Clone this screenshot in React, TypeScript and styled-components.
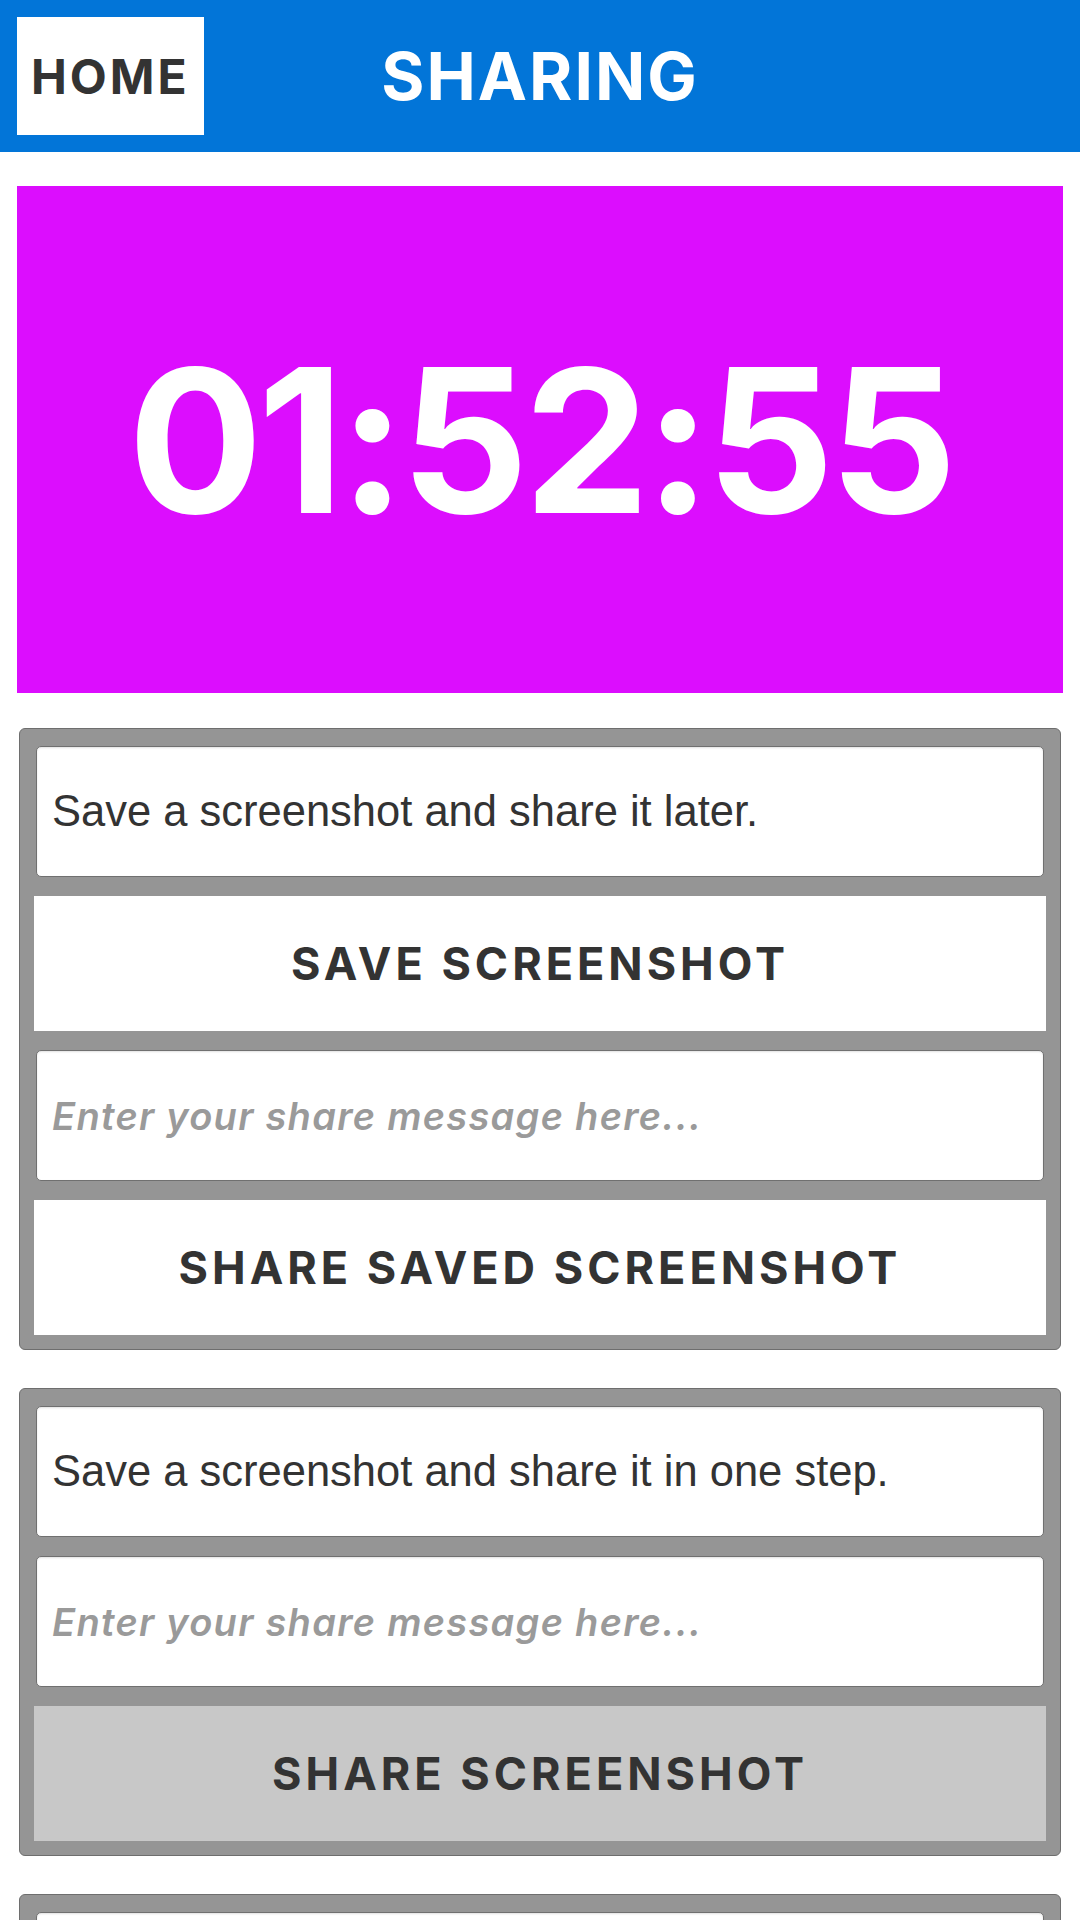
import React from 'react';
import styled, { createGlobalStyle } from 'styled-components';

const GlobalStyle = createGlobalStyle`
	html, body {
		margin: 0;
		padding: 0;
		background: #ffffff;
	}

	* {
		box-sizing: border-box;
	}
`;

const Page = styled.div`
	width: 1080px;
	height: 1920px;
	display: flex;
	flex-direction: column;
	overflow: hidden;
`;

const Header = styled.header`
	height: 152px;
	flex-shrink: 0;
	padding: 17px;
	display: grid;
	grid-template-columns: 1fr auto 1fr;
	align-items: center;
	background-color: #0275d8;
`;

const HomeButton = styled.button`
	justify-self: start;
	height: 118px;
	padding: 0 14px;
	border: none;
	background-color: #ffffff;
	color: #333333;
	font-family: Inter, 'Noto Sans', sans-serif;
	font-weight: 700;
	font-size: 48px;
	letter-spacing: 3px;
`;

const Title = styled.h1`
	margin: 0;
	color: #ffffff;
	font-family: Inter, 'Noto Sans', sans-serif;
	font-weight: 700;
	font-size: 66px;
	letter-spacing: 2px;
`;

const Timer = styled.div`
	height: 507px;
	flex-shrink: 0;
	margin: 34px 17px 0;
	display: flex;
	align-items: center;
	justify-content: center;
	background-color: #dc0dfe;
	color: #ffffff;
	font-family: Inter, 'Noto Sans', sans-serif;
	font-weight: 700;
	font-size: 200px;
	letter-spacing: -5px;
`;

const Cards = styled.div`
	margin-top: 35px;
	display: flex;
	flex-direction: column;
	gap: 38px;
`;

const Card = styled.section`
	margin: 0 19px;
	padding: 17px 14px 14px;
	display: flex;
	flex-direction: column;
	gap: 19px;
	flex-shrink: 0;
	border: 1px solid #6e6e6e;
	border-radius: 6px;
	background-color: #959595;
`;

const Field = styled.div`
	height: 131px;
	flex-shrink: 0;
	margin: 0 2px;
	padding: 0 15px;
	display: flex;
	align-items: center;
	border: 1px solid #707070;
	border-radius: 5px;
	background-color: #ffffff;
	box-shadow: inset 0 1px 2px rgba(0, 0, 0, 0.12);
	color: #333333;
	font-family: 'Liberation Sans', Arial, sans-serif;
	font-size: 43.5px;
`;

const MessageInput = styled.input`
	height: 131px;
	flex-shrink: 0;
	margin: 0 2px;
	padding: 0 15px;
	border: 1px solid #707070;
	border-radius: 5px;
	background-color: #ffffff;
	box-shadow: inset 0 1px 2px rgba(0, 0, 0, 0.12);
	color: #333333;
	font-family: Inter, 'Noto Sans', sans-serif;
	font-style: italic;
	font-weight: 600;
	font-size: 38px;
	letter-spacing: 1.3px;
	outline: none;

	&::placeholder {
		color: #9a9a9a;
	}
`;

const ActionButton = styled.button<{ $disabled?: boolean }>`
	height: 135px;
	flex-shrink: 0;
	border: none;
	background-color: ${({ $disabled }) => ($disabled ? '#c8c8c8' : '#ffffff')};
	color: #333333;
	font-family: Inter, 'Noto Sans', sans-serif;
	font-weight: 700;
	font-size: 45px;
	letter-spacing: 4px;
`;

const App = () => {
	return (
		<Page>
			<GlobalStyle />
			<Header>
				<HomeButton>HOME</HomeButton>
				<Title>SHARING</Title>
			</Header>
			<Timer>01:52:55</Timer>
			<Cards>
				<Card>
					<Field>Save a screenshot and share it later.</Field>
					<ActionButton>SAVE SCREENSHOT</ActionButton>
					<MessageInput placeholder="Enter your share message here..." />
					<ActionButton>SHARE SAVED SCREENSHOT</ActionButton>
				</Card>
				<Card>
					<Field>Save a screenshot and share it in one step.</Field>
					<MessageInput placeholder="Enter your share message here..." />
					<ActionButton $disabled>SHARE SCREENSHOT</ActionButton>
				</Card>
				<Card>
					<Field />
				</Card>
			</Cards>
		</Page>
	);
};

export default App;
